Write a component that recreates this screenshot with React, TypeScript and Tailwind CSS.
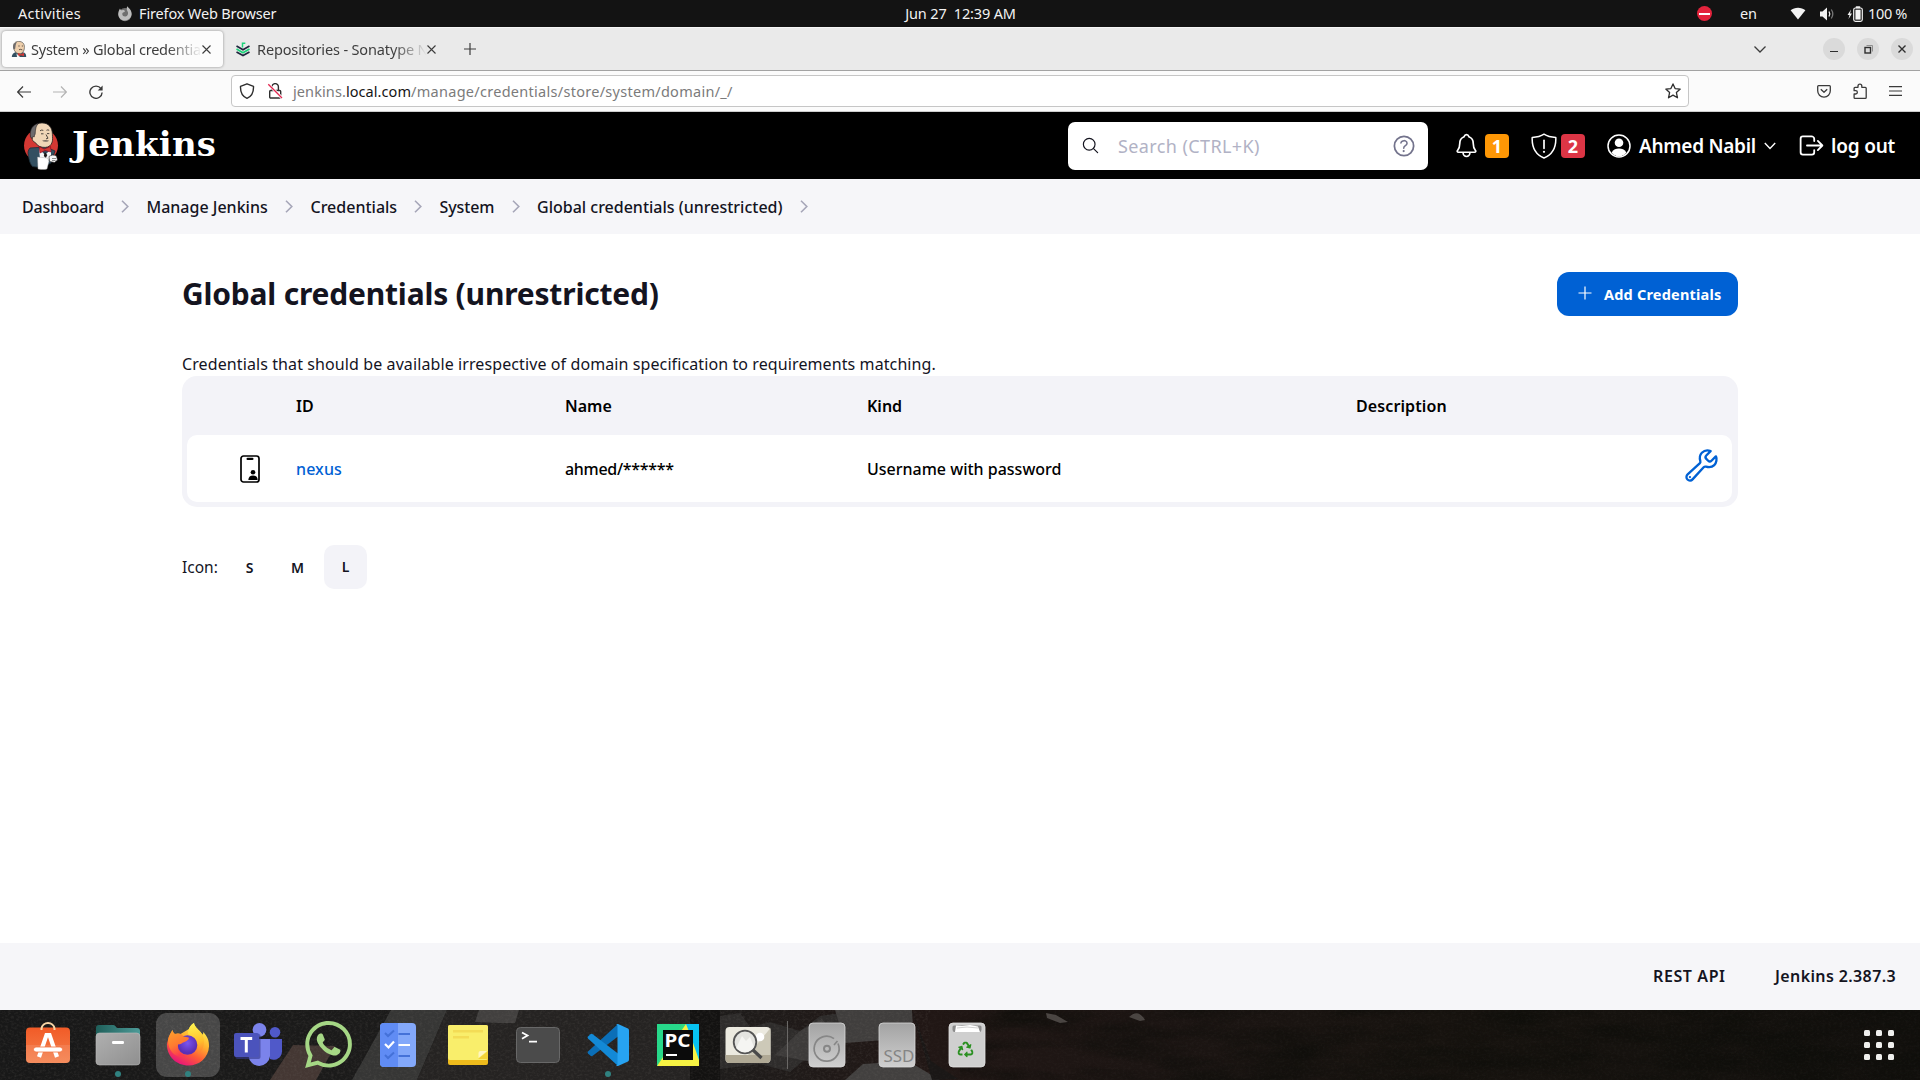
import type { ReactNode } from 'react';
import {
  IoBuildOutline,
  IoHelpCircleOutline,
  IoLogOutOutline,
  IoNotificationsOutline,
  IoSearchOutline,
} from 'react-icons/io5';
import { FaRecycle } from 'react-icons/fa';
import { SiWhatsapp } from 'react-icons/si';

/* ---------- GNOME top bar ---------- */

function TopBar() {
  return (
    <header className="flex h-[27px] shrink-0 items-center bg-[#131313] text-[14.5px] leading-none text-[#f2f2f2]">
      <div className="flex flex-1 items-center pl-[18px]">
        <span className="w-[99px] tracking-[0.26px]">Activities</span>
        <svg viewBox="0 0 16 16" className="mr-[6px] h-4 w-4">
          <circle cx="8" cy="8.6" r="6.6" fill="#6f6f6f" />
          <path d="M1.3 7C1.6 4.6 2.6 3 3 2.400c.3 1.200.9 1.700 1.800 1.800L6.500 4C8 4.500 8.600 5.600 6.800 6.200c-1.200.4-1.600 1-1.500 2 .2 1.600 1.700 2.500 3.300 2.200 1.900-.4 2.700-2 2.400-3.900C10.700 5 9.500 4 9.700 2c.1-.8.600-1.400 1-1.700.1 1.400 2 2.200 3 4 1.200 2.200 1.200 4.700.1 6.700-1.500 2.700-4.500 4-7.300 3.400C3 13.700.9 10.700 1.300 7Z" fill="#bdbdbd" />
        </svg>
        <span className="tracking-[-0.15px]">Firefox Web Browser</span>
      </div>
      <span className="pr-1 whitespace-pre tracking-[-0.15px]">Jun 27  12:39 AM</span>
      <div className="flex flex-1 items-center justify-end pr-[13px]">
        <span className="mr-[28px] flex h-[15px] w-[15px] items-center justify-center rounded-full bg-[#e3233c]">
          <span className="h-[2px] w-[11px] bg-white" />
        </span>
        <span className="mr-[33px] tracking-[-0.1px]">en</span>
        <svg viewBox="0 0 16 13" className="mr-[13px] h-[13px] w-4">
          <path d="M8 12.500.600 3.200C4.500-.2 11.500-.2 15.400 3.200Z" fill="#f2f2f2" />
        </svg>
        <svg viewBox="0 0 16 14" className="mr-[12px] h-[14px] w-4">
          <path d="M1 4.500h2.500L8 .5v13L3.500 9.500H1Z" fill="#f2f2f2" />
          <path d="M10 4.500q1.600 2.500 0 5" fill="none" stroke="#f2f2f2" strokeWidth="1.300" />
          <path d="M12.300 2.500q3 4.500 0 9" fill="none" stroke="#777" strokeWidth="1.300" />
        </svg>
        <svg viewBox="0 0 16 16" className="mr-[5px] h-4 w-4">
          <path d="M4 3.500.500 9h2L1.500 13 5 7.500H3Z" fill="#f2f2f2" />
          <rect x="6.700" y="2" width="8.600" height="13.300" rx="1.800" fill="none" stroke="#f2f2f2" strokeWidth="1.200" />
          <rect x="8.400" y="3.700" width="5.200" height="9.900" fill="#f2f2f2" />
          <rect x="8.700" y=".2" width="4.600" height="2" rx=".8" fill="#f2f2f2" />
        </svg>
        <span className="tracking-[-0.34px]">100 %</span>
      </div>
    </header>
  );
}

/* ---------- Browser chrome ---------- */

function ButlerIcon() {
  return (
    <svg viewBox="0 0 16 16" className="h-4 w-4">
      <path d="M.800 16C.800 13.400 2.500 11.500 5 11l8 .5c1.500.6 2.200 2.200 2.200 4.500Z" fill="#335061" />
      <path d="M2.500 6C2.200 2.200 4.500.4 7.800.4c3.500 0 5.800 2.200 5.600 6.100-.1 3.600-2 6.300-5 6.300-3.300 0-5.600-3-5.900-6.800Z" fill="#eecfac" stroke="#56524a" strokeWidth=".7" />
      <path d="M2.300 7.500C1.600 3.800 3.600 1.200 6 .9 4.600 2.600 4.600 5 4.200 7.800L3 8.500Z" fill="#6d6b6d" />
      <path d="M7.300 5h1.400M10.800 5h1.200M8 8.700q1.500-.8 3.300.2" fill="none" stroke="#3d3530" strokeWidth=".8" />
      <path d="m7 12 3 1.200 3-1.500v3.600l-3-1-3 1Z" fill="#d33833" />
      <path d="M5.500 12.500 9 16H6Z" fill="#f0f0f0" />
    </svg>
  );
}

function SonatypeIcon() {
  return (
    <svg viewBox="0 0 14 15" className="h-[15px] w-[14px]" fill="none">
      <path d="M.500 4 7 7.800 13.500 4" stroke="#20263e" strokeWidth="1.700" />
      <path d="M.500 7 7 10.800 13.500 7" stroke="#1bd27a" strokeWidth="1.700" />
      <path d="M.500 10 7 13.600 13.500 10" stroke="#20263e" strokeWidth="1.700" />
      <path d="M6.500 5.500V1.200h2.800" stroke="#1bd27a" strokeWidth="1.500" />
    </svg>
  );
}

function CloseGlyph() {
  return (
    <svg viewBox="0 0 9 9" className="h-[9px] w-[9px] shrink-0" fill="none" stroke="#3c3c3c" strokeWidth="1.100">
      <path d="M.500.500 8.500 8.500M8.500.500.500 8.500" />
    </svg>
  );
}

function WindowButton({ children }: { children: ReactNode }) {
  return <span className="flex h-[22px] w-[22px] items-center justify-center rounded-full bg-[#dadada]">{children}</span>;
}

function TabStrip() {
  return (
    <div className="flex h-[44px] shrink-0 items-center border-t border-b border-t-[#f7f7f7] border-b-[#a3a3a3] bg-[#eaeaea] text-[14.5px] text-[#3e3e3e]">
      <div className="ml-[2px] flex h-[36px] w-[221px] items-center rounded-[4px] bg-[#fcfcfc] pl-[9px] shadow-[0_0_3px_rgba(0,0,0,0.4)]">
        <ButlerIcon />
        <span className="ml-[4px] w-[171px] pt-[2px] whitespace-nowrap tracking-[-0.24px] [mask-image:linear-gradient(to_right,black_80%,transparent)]">
          System » Global credentia
        </span>
        <CloseGlyph />
      </div>
      <div className="flex h-[36px] w-[224px] items-center pl-[13px]">
        <SonatypeIcon />
        <span className="ml-[7px] w-[170px] pt-[2px] whitespace-nowrap tracking-[-0.14px] [mask-image:linear-gradient(to_right,black_80%,transparent)]">
          Repositories - Sonatype N
        </span>
        <CloseGlyph />
      </div>
      <svg viewBox="0 0 12 12" className="ml-[17px] h-3 w-3" stroke="#3c3c3c" strokeWidth="1.200">
        <path d="M6 0v12M0 6h12" />
      </svg>
      <div className="ml-auto flex items-center pr-[7px]">
        <svg viewBox="0 0 12 7" className="mr-[57px] h-[7px] w-3" fill="none" stroke="#3c3c3c" strokeWidth="1.300">
          <path d="m.500.500 5.500 5.500L11.500.500" />
        </svg>
        <div className="flex gap-3">
          <WindowButton>
            <span className="mt-[5px] h-px w-2 bg-[#2e2e2e]" />
          </WindowButton>
          <WindowButton>
            <svg viewBox="0 0 9 9" className="h-[9px] w-[9px]" fill="none">
              <path d="M2.500.500h6v6" stroke="#8f8f8f" />
              <rect x="1" y="2.500" width="5.500" height="5.500" stroke="#2e2e2e" strokeWidth="1.400" />
            </svg>
          </WindowButton>
          <WindowButton>
            <svg viewBox="0 0 8 8" className="h-2 w-2" stroke="#2e2e2e" strokeWidth="1.400">
              <path d="m.500.500 7 7M7.500.500l-7 7" />
            </svg>
          </WindowButton>
        </div>
      </div>
    </div>
  );
}

function NavBar() {
  return (
    <div className="flex h-[41px] shrink-0 items-center border-b border-[#cdcdcd] bg-[#fbfbfb]">
      <div className="flex w-[231px] shrink-0 items-center pt-px pl-[17px]">
        <svg viewBox="0 0 14 12" className="h-3 w-[14px]" fill="none" stroke="#3a3a3a" strokeWidth="1.200">
          <path d="M14 6H1M6 .500.700 6 6 11.500" />
        </svg>
        <svg viewBox="0 0 14 12" className="ml-[22px] h-3 w-[14px]" fill="none" stroke="#b4b4b4" strokeWidth="1.200">
          <path d="M0 6h13M8 .500 13.300 6 8 11.500" />
        </svg>
        <svg viewBox="0 0 14 14" className="ml-[22px] h-[14px] w-[14px]" fill="none" stroke="#3a3a3a" strokeWidth="1.400">
          <path d="M12 3.700A6.100 6.100 0 1 0 13.100 7.500" />
          <path d="M13.600.500v5H8.700Z" fill="#3a3a3a" stroke="none" />
        </svg>
      </div>
      <div className="flex h-8 w-[1458px] shrink-0 items-center rounded-[4px] border border-[#c6c6c6] bg-white text-[14.5px] text-[#7b7b7b]">
        <svg viewBox="0 0 16 16" className="ml-[7px] h-4 w-4" fill="none" stroke="#2e2e2e" strokeWidth="1.400" strokeLinejoin="round">
          <path d="M8 .8 14.500 3.300C14.700 8.500 12.500 13.400 8 15.300 3.500 13.400 1.300 8.500 1.500 3.300Z" />
        </svg>
        <svg viewBox="0 0 16 16" className="ml-[12px] h-4 w-4" fill="none" stroke="#2e2e2e" strokeWidth="1.400">
          <rect x="2.700" y="7.500" width="11" height="7.500" rx="1" />
          <path d="M5 7V3.800a3.200 3.200 0 0 1 6.400 0V7" />
          <path d="m1.800 1.800 13 13" stroke="#fff" strokeWidth="3" />
          <path d="m1.300 1.300 13.700 13.700" stroke="#e22850" strokeWidth="1.300" />
        </svg>
        <div className="ml-[10px] flex pt-[2px]">
          <span className="tracking-[0.1px]">jenkins.</span>
          <span className="tracking-[0.06px] text-[#151515]">local.com</span>
          <span className="tracking-[0.28px]">/manage/credentials/store/system/domain/_/</span>
        </div>
        <svg viewBox="0 0 16 16" className="mr-[7px] ml-auto h-4 w-4" fill="none" stroke="#2e2e2e" strokeWidth="1.300" strokeLinejoin="round">
          <path d="m8 .9 2.100 4.700 5.100.5-3.800 3.500 1.100 5.200L8 12.100l-4.500 2.700 1.100-5.200L.8 6.100l5.100-.5Z" />
        </svg>
      </div>
      <div className="ml-auto flex items-center pr-[18px]">
        <svg viewBox="0 0 14 13" className="h-[13px] w-[14px]" fill="none" stroke="#3a3a3a" strokeWidth="1.300" strokeLinejoin="round">
          <path d="M1.500.700h11q.8 0 .8.900v4.200c0 3.500-2.600 6.300-6.300 6.300S.700 9.300.700 5.800V1.600q0-.9.800-.9Z" />
          <path d="m3.800 4.300 3.200 3 3.200-3" />
        </svg>
        <svg viewBox="0 0 14 16" className="ml-[22px] h-4 w-[14px]" fill="none" stroke="#3a3a3a" strokeWidth="1.300" strokeLinejoin="round">
          <path d="M5 4.300V3a1.900 1.900 0 0 1 3.800 0v1.300h3.500q.9 0 .9.900v9.200q0 .9-.9.900H2q-.9 0-.9-.9V11h1.600a1.600 1.600 0 0 0 0-3.300H1.100V5.200q0-.9.900-.9Z" />
        </svg>
        <svg viewBox="0 0 13 10" className="ml-[22px] h-[10px] w-[13px]" stroke="#3a3a3a" strokeWidth="1.200">
          <path d="M0 .600h13M0 5h13M0 9.400h13" />
        </svg>
      </div>
    </div>
  );
}

/* ---------- Jenkins page ---------- */

function JenkinsLogo() {
  return (
    <svg viewBox="0 0 36 48" className="h-12 w-9">
      <circle cx="18" cy="23.500" r="17" fill="#d33833" />
      <path d="M7 26c-2 2-2.500 5-1.500 7.500C6 38 7 42 9.500 44.500l8 1L28 41l4-12-9-4Z" fill="#335061" stroke="#1d2f3a" strokeWidth=".8" />
      <path d="M9 12.500C8.500 5.500 12.500.900 19 .900c6.500 0 10.500 4.600 10.400 11.600 0 3 .4 5-.2 7.500-1 3.500-3.600 5.200-7 5.400-4 .2-7.700-1.200-9.700-4.700-2-.7-3.600-2.700-3.400-5Z" fill="#f0d6b7" stroke="#231f20" strokeWidth=".8" />
      <path d="M7.500 15C6.500 7.500 9.500 2.500 16 1.200c-3.500 2.300-3.300 6.300-3.800 9.800.3 1.500-1 2-1 4-1.200-.8-2.200 0-2.200 1.500Z" fill="#6d6b6d" stroke="#231f20" strokeWidth=".6" />
      <path d="M17 8.800q1.700-1.300 3.300-.4M23.500 8.300q1.300-.9 2.700 0M18 11.800h2.500M24 11.600h2.300M23 12.500l2 3.700-2 .7" fill="none" stroke="#231f20" strokeWidth=".8" />
      <path d="M19 18.800q3-1.700 7-.2-.5 1.300-3.200 1.200-2.400 0-3.800-1Z" fill="#7a6d62" />
      <path d="M16 26.500 22 33l6-6v7l-3 5-8-2Z" fill="#f7f7f7" />
      <path d="m16 24.500 5.200 2.500 6.300-2.500.5 5.500-6-1.500-5 2.500Z" fill="#d33833" stroke="#81001c" strokeWidth=".6" />
      <path d="m21.800 30-1 4 2 2 1.500-3Z" fill="#1d1919" />
      <path d="m14.500 35 10 1 1.500 3-2 8c-3 1-6 .5-9 0Z" fill="#fff" stroke="#999" strokeWidth=".4" />
      <path d="M26 34.500c2-1.500 5-2 7.500-.5l1 4-3 2.500-5-1Z" fill="#f7f7f7" stroke="#231f20" strokeWidth=".6" />
      <path d="M29 36.500h4M29 38.500h3.500" stroke="#444" strokeWidth=".6" />
    </svg>
  );
}

function JenkinsHeader() {
  return (
    <div className="flex h-[67px] shrink-0 items-center bg-black text-white">
      <div className="flex items-center pl-[23px]">
        <JenkinsLogo />
        <span className="ml-[13px] pb-[3px] font-['DejaVu_Serif','Liberation_Serif',serif] text-[34px] leading-none font-bold tracking-[0.2px]">Jenkins</span>
      </div>
      <div className="ml-auto flex items-center">
        <div className="flex h-12 w-[360px] items-center rounded-[7px] bg-white text-[18px] text-[#b1b2c5]">
          <IoSearchOutline className="ml-[13px] h-[19px] w-[19px] text-[#14141f]" />
          <span className="ml-[18px] pt-px tracking-[0.4px]">Search (CTRL+K)</span>
          <IoHelpCircleOutline className="mr-[10px] ml-auto h-7 w-7 text-[#73738c]" />
        </div>
        <IoNotificationsOutline className="ml-[25px] h-[27px] w-[27px]" />
        <span className="ml-[5px] flex h-6 w-6 items-center justify-center rounded-[4px] bg-[#fe9705] text-[18px] leading-none font-bold">1</span>
        <svg viewBox="0 0 26 26" className="ml-[22px] h-[26px] w-[26px]" fill="none" stroke="#fff" strokeWidth="1.500" strokeLinejoin="round" strokeLinecap="round">
          <path d="M13 1.200C10 3.200 5.500 4.300 1.200 4.500.8 14 4.500 21.500 13 25 21.500 21.500 25.200 14 24.800 4.500 20.500 4.300 16 3.200 13 1.200Z" />
          <path d="M13 7.300v8" strokeWidth="1.700" />
          <circle cx="13" cy="18.800" r="1.100" fill="#fff" stroke="none" />
        </svg>
        <span className="ml-[4px] flex h-6 w-6 items-center justify-center rounded-[4px] bg-[#dc3545] text-[18px] leading-none font-bold">2</span>
        <svg viewBox="0 0 24 24" className="ml-[22px] h-6 w-6">
          <circle cx="12" cy="12" r="11" fill="none" stroke="#fff" strokeWidth="1.500" />
          <circle cx="12" cy="8.800" r="4.300" fill="#fff" />
          <path d="M4.600 18.500C6.500 15.600 9 14.600 12 14.600s5.500 1 7.400 3.900A10 10 0 0 1 12 22.500a10 10 0 0 1-7.400-4Z" fill="#fff" />
        </svg>
        <span className="ml-[8px] w-[119px] pt-px text-[19px] font-semibold tracking-[-0.27px] whitespace-nowrap">Ahmed Nabil</span>
        <svg viewBox="0 0 12 8" className="ml-[6px] h-2 w-3" fill="none" stroke="#fff" strokeWidth="1.400">
          <path d="m.800 1 5.200 5.500L11.200 1" />
        </svg>
        <IoLogOutOutline className="ml-[21px] h-[29px] w-[29px]" />
        <span className="mr-[24px] ml-[5px] w-[65px] pt-px text-[19px] font-semibold tracking-[-0.2px] whitespace-nowrap">log out</span>
      </div>
    </div>
  );
}

const crumbs = [
  { label: 'Dashboard', width: 'w-[99px] tracking-[-0.2px]' },
  { label: 'Manage Jenkins', width: 'w-[138.500px]' },
  { label: 'Credentials', width: 'w-[103.500px]' },
  { label: 'System', width: 'w-[72px] tracking-[-0.1px]' },
  { label: 'Global credentials (unrestricted)', width: 'w-[262.500px]' },
];

function Breadcrumbs() {
  return (
    <nav className="flex h-[55px] shrink-0 items-center bg-[#f6f6f9] pl-[22px] text-[16px] font-medium text-[#14141f]">
      {crumbs.map((crumb) => (
        <span key={crumb.label} className="flex items-center">
          <span className={`${crumb.width} whitespace-nowrap`}>{crumb.label}</span>
          <svg viewBox="0 0 8 13" className="mr-[17.500px] h-[13px] w-2" fill="none" stroke="#a6a6b8" strokeWidth="1.600">
            <path d="m1 .800 5.800 5.700L1 12.200" />
          </svg>
        </span>
      ))}
    </nav>
  );
}

function CredentialIcon() {
  return (
    <svg viewBox="0 0 20 28" className="h-7 w-5">
      <rect x="1" y="1" width="18" height="26" rx="2.500" fill="none" stroke="#000" strokeWidth="1.700" />
      <rect x="6.500" y="2.800" width="7" height="2.200" rx="1.100" />
      <circle cx="13" cy="17.300" r="2.300" />
      <path d="M8.300 25c.2-3.200 1.900-4.500 4.700-4.500s4.500 1.300 4.700 4.500Z" />
    </svg>
  );
}

function CredentialsTable() {
  return (
    <div className="h-[131px] rounded-[15px] bg-[#f3f3f8] px-[5px] text-[16px] text-black">
      <div className="grid h-[59px] grid-cols-[109px_269px_302px_489px_1fr] items-center pr-[6px] font-semibold">
        <span />
        <span>ID</span>
        <span>Name</span>
        <span>Kind</span>
        <span className="tracking-[0.1px]">Description</span>
      </div>
      <div className="mr-px grid h-[67px] grid-cols-[109px_269px_302px_489px_1fr] items-center rounded-[10px] bg-white font-medium">
        <span className="flex justify-end pr-[36px]"><CredentialIcon /></span>
        <span className="tracking-[0.1px] text-[#0061d4]">nexus</span>
        <span className="tracking-[-0.3px]">ahmed/******</span>
        <span>Username with password</span>
        <span className="flex justify-end pr-[12px] pb-[7px]"><IoBuildOutline className="h-[37px] w-[37px] text-[#0061d4]" /></span>
      </div>
    </div>
  );
}

function MainPanel() {
  return (
    <main className="flex grow flex-col bg-white pr-[182px] pl-[182px] text-[#14141f]">
      <div className="mt-[38px] flex h-[44px] items-center justify-between">
        <h1 className="text-[30px] leading-none font-bold tracking-[-0.2px]">Global credentials (unrestricted)</h1>
        <button className="flex h-[44px] w-[181px] items-center rounded-[12px] bg-[#0061d4] pl-[21px] text-[14.5px] font-bold text-white">
          <svg viewBox="0 0 14 14" className="mb-[2px] h-[14px] w-[14px]" stroke="#fff" strokeWidth="1.200">
            <path d="M7 .500v13M.500 7h13" />
          </svg>
          <span className="ml-[12px] pt-px tracking-[0.2px] whitespace-nowrap">Add Credentials</span>
        </button>
      </div>
      <p className="mt-[36px] h-[24px] text-[16px] leading-[24px] tracking-[0.1px] whitespace-nowrap">
        Credentials that should be available irrespective of domain specification to requirements matching.
      </p>
      <CredentialsTable />
      <div className="mt-[38px] flex h-[44px] items-center">
        <span className="w-[46px] pt-[2px] text-[15.5px]">Icon:</span>
        <div className="flex gap-[5px] text-[14px] font-semibold">
          <span className="flex h-[44px] w-[43px] items-center justify-center">S</span>
          <span className="flex h-[44px] w-[43px] items-center justify-center">M</span>
          <span className="flex h-[44px] w-[43px] items-center justify-center rounded-[10px] bg-[#f3f3f8] pb-[2px]">L</span>
        </div>
      </div>
    </main>
  );
}

function PageFooter() {
  return (
    <footer className="flex h-[67px] shrink-0 items-center justify-end bg-[#f6f6f9] pr-[24px] pb-[2px] text-[16px] font-semibold text-[#14141f]">
      <span className="w-[122px] tracking-[0.6px]">REST API</span>
      <span className="w-[121px] tracking-[0.38px] whitespace-nowrap">Jenkins 2.387.3</span>
    </footer>
  );
}

/* ---------- Dock ---------- */

function Wallpaper() {
  return (
    <svg viewBox="0 0 1920 70" preserveAspectRatio="none" className="absolute inset-0 h-full w-full">
      <defs>
        <linearGradient id="ground">
          <stop offset="0" stopColor="#181818" />
          <stop offset=".36" stopColor="#1e1d1c" />
          <stop offset=".48" stopColor="#211715" />
          <stop offset=".6" stopColor="#1c1513" />
          <stop offset=".75" stopColor="#17130f" />
          <stop offset="1" stopColor="#12100d" />
        </linearGradient>
        <filter id="grain" x="0" y="0" width="100%" height="100%" colorInterpolationFilters="sRGB">
          <feTurbulence type="fractalNoise" baseFrequency=".35 .45" numOctaves="3" seed="4" />
          <feColorMatrix values="0 0 0 0 .5  0 0 0 0 .48  0 0 0 0 .46  .9 0 0 0 -.38" />
        </filter>
        <filter id="shade" x="0" y="0" width="100%" height="100%" colorInterpolationFilters="sRGB">
          <feTurbulence type="fractalNoise" baseFrequency=".012 .05" numOctaves="4" seed="9" />
          <feColorMatrix values="0 0 0 0 .04  0 0 0 0 .045  0 0 0 0 .03  2.200 0 0 0 -.8" />
        </filter>
      </defs>
      <rect width="1920" height="70" fill="url(#ground)" />
      <path d="M270 70 293 35 335 36 316 70Z" fill="#443733" />
      <path d="M352 70 391 0H447L417 70Z" fill="#363635" />
      <path d="M447 0 417 70H690V0Z" fill="#252322" />
      <path d="M479 0 475 12 500 13H515L519 0Z" fill="#42403f" />
      <path d="M690 0h30v70h-30Z" fill="#131211" />
      <path d="m720 6 20-3 10 14 20-5 30 9 20-15 28-4 20 12-28 24-30 7-20 17-30-8-40 5Z" fill="#2e2c2b" />
      <path d="m775 45 25-24 22-12 10 12-14 32Z" fill="#3d3b3a" />
      <path d="m835 0 77 0 3 52-30-22-40 3Z" fill="#403e3d" />
      <path d="m845 70 18-16 45-3 32 19Z" fill="#42403f" />
      <path d="m912 0 20 70 26-1-27-18Z" fill="#1a1716" />
      <rect x="960" width="960" height="70" filter="url(#shade)" opacity=".6" />
      <path d="m1046 3 10 2 12 7-8 1-13-5ZM1129 7q9-9 16 3l-5 1Z" fill="#4a4542" />
      <rect width="930" height="70" filter="url(#grain)" opacity=".4" />
      <rect x="930" width="990" height="70" filter="url(#grain)" opacity=".15" />
    </svg>
  );
}

function Glyph({ children }: { children: ReactNode }) {
  return <svg viewBox="0 0 48 48" className="h-12 w-12">{children}</svg>;
}

function SoftwareIcon() {
  return (
    <Glyph>
      <defs>
        <linearGradient id="sw" x2="0" y2="1"><stop stopColor="#f15b27" /><stop offset="1" stopColor="#f4804c" /></linearGradient>
      </defs>
      <rect x="2" y="7.500" width="44" height="35.500" rx="4" fill="url(#sw)" />
      <path d="M2 25h44v14a4 4 0 0 1-4 4H6a4 4 0 0 1-4-4Z" fill="#fff" fillOpacity=".1" />
      <path d="M17.500 10V8.500a6.600 6.600 0 0 1 13 0V10" fill="none" stroke="#f8d5a5" strokeWidth="2" />
      <path d="m15 37 7.500-22h3L33 37" fill="none" stroke="#fff" strokeWidth="4.200" />
      <rect x="9.500" y="27" width="29" height="5" rx="2.500" fill="#fff" stroke="#f1733f" strokeWidth=".8" />
    </Glyph>
  );
}

function FilesIcon() {
  return (
    <Glyph>
      <defs>
        <linearGradient id="teal"><stop stopColor="#1f5f5a" /><stop offset="1" stopColor="#4d9b98" /></linearGradient>
        <linearGradient id="fgrey" x2="1" y2="1"><stop stopColor="#b0b0b0" /><stop offset="1" stopColor="#8f8f8f" /></linearGradient>
      </defs>
      <path d="M2 30V8q0-3 3-3h14q1.500 0 2.500 1.300L23 8h20q3 0 3 3v19Z" fill="url(#teal)" />
      <rect x="2" y="13" width="44" height="32" rx="3.500" fill="url(#fgrey)" stroke="#bdbdbd" strokeWidth=".6" />
      <rect x="18" y="21" width="12" height="3" rx="1.200" fill="#fff" />
    </Glyph>
  );
}

function FirefoxIcon() {
  return (
    <Glyph>
      <defs>
        <linearGradient id="fxbody" x1=".8" y1=".1" x2=".3" y2="1">
          <stop stopColor="#fff14f" /><stop offset=".35" stopColor="#ffb02e" /><stop offset=".65" stopColor="#ff5b36" /><stop offset="1" stopColor="#e5107f" />
        </linearGradient>
        <linearGradient id="fxtail" x1=".5" y1="0" x2=".6" y2="1">
          <stop stopColor="#fff450" /><stop offset=".6" stopColor="#ffbf2c" /><stop offset="1" stopColor="#ff7a2f" />
        </linearGradient>
        <linearGradient id="fxhead" x2=".4" y2="1"><stop stopColor="#ffa42b" /><stop offset=".6" stopColor="#ff7a30" /><stop offset="1" stopColor="#fb3a50" /></linearGradient>
        <radialGradient id="fxorb" cx=".5" cy=".4"><stop stopColor="#7a55f0" /><stop offset="1" stopColor="#5a2fb5" /></radialGradient>
      </defs>
      <path d="M4 20C4.500 16 7 12.500 8.500 10c.5 2.500 1.500 3.500 2.500 4 2-.8 4-.6 5.500 0L25 9c1-3 3-5 5-6 .3 4 5.500 7 8.500 11.500 1-.2.600-1.500.500-2.500 4.500 4 6.300 9 6 14.500C44.500 37.500 35.500 45.500 24.500 45.500 12.500 45.500 3 36.500 3 25c0-2 .5-3.500 1-5Z" fill="url(#fxbody)" />
      <path d="M24 14c0-5.500 2.500-9 6-11 .3 4.500 6 7 8.500 12 3 6.500 1.500 15-4.500 19.500 3-8-1-14.500-10-20.500Z" fill="url(#fxtail)" />
      <circle cx="23.500" cy="25" r="9.800" fill="url(#fxorb)" />
      <path d="M4 20c.8-4.500 3.500-7.500 4.500-10 .5 2.500 1.500 3.500 2.500 4 4-1.300 7 0 8.500 2.500l5 1c1.200.8-.8 3.500-4 4.500-3 1-3.500 2.500-6.500 2.500-1.500 6 2 11 9 11.500-9 3.500-19-3-19-16Z" fill="url(#fxhead)" />
    </Glyph>
  );
}

function TeamsIcon() {
  return (
    <Glyph>
      <circle cx="41" cy="12.300" r="5.300" fill="#5059c9" />
      <path d="M33 19h15v12.500a8.500 8.500 0 0 1-12 7.500Z" fill="#5059c9" />
      <circle cx="25.500" cy="9.800" r="6.900" fill="#7b83eb" />
      <path d="M14.500 19h21.500v17a10.800 11 0 0 1-21.500 0Z" fill="#7b83eb" />
      <rect x="1.500" y="14" width="25" height="25" rx="2" fill="#33398a" opacity=".6" />
      <rect x="0" y="13" width="25" height="24" rx="2" fill="#4b53bc" />
      <path d="M6.500 18.500h11.700M12.300 18.500v14" stroke="#fff" strokeWidth="3" />
    </Glyph>
  );
}

function TodoIcon() {
  return (
    <Glyph>
      <rect x="6" y="3" width="36" height="44" rx="4" fill="#83a8fa" />
      <path d="M10 3h14v44H10a4 4 0 0 1-4-4V7a4 4 0 0 1 4-4Z" fill="#608cf4" />
      <g fill="none" strokeWidth="2">
        <path d="m11 13 3 3 6-5.500M11 35l3 3 6-5.500M28 14h8M24.500 14h11.500M24.500 36h11.500" stroke="#4471d8" />
        <path d="m11 24 3.500 3.500 5.500-6M24.500 25h11.500" stroke="#fff" strokeWidth="2.200" />
      </g>
    </Glyph>
  );
}

function NotesIcon() {
  return (
    <Glyph>
      <rect x="4" y="5" width="40" height="40" rx="2" fill="#eebb1c" />
      <rect x="4" y="5" width="40" height="35" rx="2" fill="#f9ee6b" />
      <path d="M9 11.300h30M9 17.300h16" stroke="#f3dc56" strokeWidth="2.500" />
      <path d="m34 39 10-8v8Z" fill="#f3d336" /><path d="M34.500 38V33q0-2 2-2H43Z" fill="#fff6bf" />
    </Glyph>
  );
}

function TerminalIcon() {
  return (
    <Glyph>
      <rect x="2.500" y="7.500" width="43" height="35" rx="4" fill="#4b4b4b" stroke="#686868" />
      <path d="m8 12.500 5.500 3L8 18.700M15 21.700h8" fill="none" stroke="#fff" strokeWidth="1.800" />
    </Glyph>
  );
}

function CodeIcon() {
  return (
    <Glyph>
      <path d="M34 4 4 31.500q-1 1 0 2l2.500 2.300q1 .8 2.200 0L34 16.500Z" fill="#0b6fb8" />
      <path d="M34 46 4 18.500q-1-1 0-2l2.500-2.300q1-.8 2.200 0L34 33.500Z" fill="#1389d6" />
      <path d="M34 4 44 8.500q1 .6 1 2v29q0 1.400-1 2L34 46q-1.200.3-2-.8.8.3 1.500-.5V5.500q-.7-1-1.500-.6.800-1 2-.9Z" fill="#27a3f1" />
    </Glyph>
  );
}

function PyCharmIcon() {
  return (
    <Glyph>
      <defs>
        <linearGradient id="pc" y2="1"><stop stopColor="#21d789" /><stop offset=".6" stopColor="#3fdc7c" /><stop offset="1" stopColor="#fcf84a" /></linearGradient>
      </defs>
      <path d="M3 4h42v42H3Z" fill="url(#pc)" />
      <path d="M32 4h13v42L30 20Z" fill="#07c3f2" />
      <path d="M3 46 32 4l4 10 9 26v6Z" fill="#f6f243" />
      <path d="M3 4h25L5 40l-2 6Z" fill="#27d88a" />
      <rect x="9" y="10" width="30" height="30" fill="#0b0b0b" />
      <rect x="12" y="34" width="11" height="2" fill="#fff" />
      <text x="10.500" y="27" fill="#fff" fontSize="17" fontWeight="700" fontFamily="Noto Sans, sans-serif" textLength="26" lengthAdjust="spacingAndGlyphs">PC</text>
    </Glyph>
  );
}

function ImageViewerIcon() {
  return (
    <Glyph>
      <rect x="1.500" y="7" width="45" height="36" rx="4" fill="#eceae0" />
      <path d="M24 35 46.500 8v27Z" fill="#cdc9b8" /><path d="M1.500 35h45v4a4 4 0 0 1-4 4h-37a4 4 0 0 1-4-4Z" fill="#b0a995" />
      <circle cx="36" cy="17" r="4.300" fill="#fff" />
      <circle cx="21" cy="22" r="11.300" fill="#e4e4e0" stroke="#555" strokeWidth="1.800" />
      <path d="m12 28 6-12 4 5 4-4 4 10a11 11 0 0 1-18 1Z" fill="#f5f5f2" />
      <path d="m29 30 8.500 8" stroke="#4a4a4a" strokeWidth="3.200" />
    </Glyph>
  );
}

function DriveBody() {
  return (
    <>
      <defs>
        <linearGradient id="drive" x2="0" y2="1"><stop stopColor="#a3a3a3" /><stop offset="1" stopColor="#cfcfcf" /></linearGradient>
      </defs>
      <rect x="6" y="3" width="36" height="44" rx="4" fill="url(#drive)" stroke="#d8d8d8" strokeWidth=".8" />
    </>
  );
}

function DiskIcon() {
  return (
    <Glyph>
      <DriveBody />
      <path d="M35 23.500A12.500 12.500 0 1 1 31 18.600M31 25l3.500-4" fill="none" stroke="#878787" strokeWidth="1.700" />
      <circle cx="24" cy="28.700" r="3" fill="none" stroke="#878787" strokeWidth="2" />
    </Glyph>
  );
}

function SsdIcon() {
  return (
    <Glyph>
      <DriveBody />
      <text x="10.500" y="42" fill="#858585" fontSize="16" fontFamily="Noto Sans, sans-serif" textLength="31" lengthAdjust="spacingAndGlyphs">SSD</text>
    </Glyph>
  );
}

function TrashIcon() {
  return (
    <Glyph>
      <rect x="6" y="3" width="36" height="44" rx="4" fill="#cfcfcf" stroke="#e2e2e2" strokeWidth=".8" />
      <path d="M9.500 7q0-1.500 1.500-1.500h26q1.500 0 1.500 1.500v2.500q0 2.500-2 2.500h-25q-2 0-2-2.500Z" fill="#8b8b8b" />
      <path d="m12 12 1-6.500 6 .5 8-1 8 1.500 2 5.500Z" fill="#fff" /><path d="m14 8 10-1 11 1" fill="none" stroke="#bbb" strokeWidth=".7" />
      <FaRecycle x="14.500" y="21.500" width="19" height="19" color="#2a9020" />
    </Glyph>
  );
}

function DockItem({ children, running, active }: { children: ReactNode; running?: boolean; active?: boolean }) {
  return (
    <div className="flex h-[70px] w-[70px] shrink-0 items-center justify-center">
      <div className={`relative flex h-16 w-16 items-center justify-center rounded-[11px] ${active ? 'bg-white/20' : ''}`}>
        <div className="mb-[2px] flex">{children}</div>
        {running && <span className="absolute bottom-0 left-[29px] h-[6px] w-[6px] rounded-full bg-[#308280]" />}
      </div>
    </div>
  );
}

function Dock() {
  return (
    <div className="relative h-[70px] shrink-0 overflow-hidden bg-[#1b1b1b]">
      <Wallpaper />
      <div className="relative flex h-full items-center pr-[26px] pl-[13px]">
        <DockItem><SoftwareIcon /></DockItem>
        <DockItem running><FilesIcon /></DockItem>
        <DockItem running active><FirefoxIcon /></DockItem>
        <DockItem><TeamsIcon /></DockItem>
        <DockItem><SiWhatsapp className="h-[47px] w-[47px] text-[#a5d785]" /></DockItem>
        <DockItem><TodoIcon /></DockItem>
        <DockItem><NotesIcon /></DockItem>
        <DockItem><TerminalIcon /></DockItem>
        <DockItem running><CodeIcon /></DockItem>
        <DockItem><PyCharmIcon /></DockItem>
        <DockItem><ImageViewerIcon /></DockItem>
        <span className="mr-[4px] ml-[4px] h-12 w-px bg-[#6a6866]" />
        <DockItem><DiskIcon /></DockItem>
        <DockItem><SsdIcon /></DockItem>
        <DockItem><TrashIcon /></DockItem>
        <div className="ml-auto grid grid-cols-3 gap-[6px]">
          {Array.from({ length: 9 }, (_, i) => (
            <span key={i} className="h-[6px] w-[6px] rounded-[1.500px] bg-[#f0f0ee]" />
          ))}
        </div>
      </div>
    </div>
  );
}

export default function App() {
  return (
    <div className="flex h-[1080px] w-[1920px] flex-col overflow-hidden bg-white font-['Noto_Sans','Open_Sans',sans-serif]">
      <TopBar />
      <TabStrip />
      <NavBar />
      <JenkinsHeader />
      <Breadcrumbs />
      <MainPanel />
      <PageFooter />
      <Dock />
    </div>
  );
}
